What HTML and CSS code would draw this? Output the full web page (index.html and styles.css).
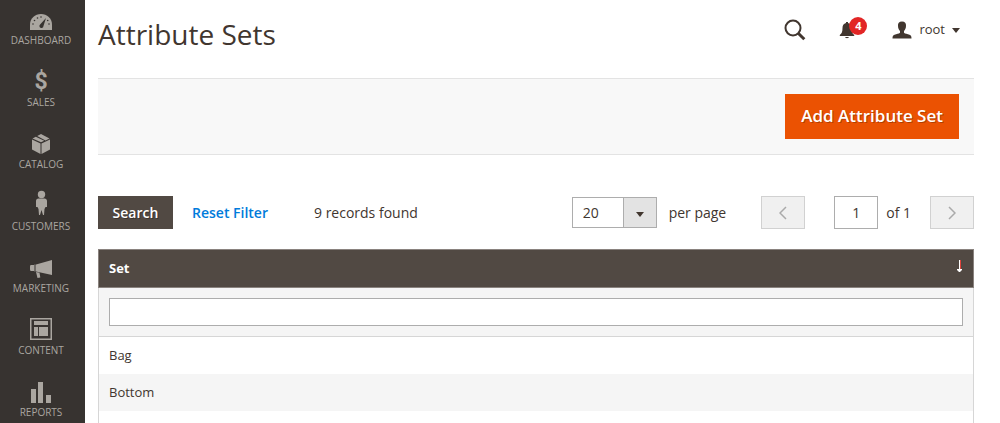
FILE: index.html
```html
<!DOCTYPE html>
<html lang="en">
<head>
<meta charset="utf-8">
<meta name="viewport" content="width=device-width, initial-scale=1">
<title>Attribute Sets</title>
<link rel="stylesheet" href="styles.css">
</head>
<body>
<div class="app">
  <nav class="menu">
    <a class="menu-item" href="#">
      <svg class="menu-icon" viewBox="0 0 28 28" aria-hidden="true">
        <path fill="currentColor" d="M3 26V20.500C3 14.500 8 10 14 10s11 4.500 11 10.500V26z"/>
        <g class="cut"><circle cx="6" cy="20" r=".8"/><circle cx="7.500" cy="16.500" r=".8"/><circle cx="10.500" cy="14" r=".8"/><circle cx="14" cy="13" r=".8"/><circle cx="22" cy="20" r=".8"/><circle cx="20.700" cy="16.500" r=".8"/><path d="M19 14l-2.600 8.200a2 2 0 1 1-3.300-1.700z"/></g>
      </svg>
      <span>DASHBOARD</span>
    </a>
    <a class="menu-item" href="#">
      <span class="menu-icon dollar" aria-hidden="true">$</span>
      <span>SALES</span>
    </a>
    <a class="menu-item" href="#">
      <svg class="menu-icon" viewBox="0 0 28 28" aria-hidden="true">
        <path fill="currentColor" d="M5 11.500l8.500 4V26L5 21.500zM14.500 15.500l8.500-4v10L14.500 26zM5.500 10.500L8.800 8.800l8.400 4L14 14.300zM10.200 8l3.800-2 8.500 4.500-4 1.900z"/>
      </svg>
      <span>CATALOG</span>
    </a>
    <a class="menu-item" href="#">
      <svg class="menu-icon" viewBox="0 0 28 28" aria-hidden="true">
        <circle cx="14.500" cy="4.500" r="3.700" fill="currentColor"/>
        <path fill="currentColor" d="M11.500 8.500h6c1.500 0 2.500 1 2.500 2.500v6h-1.500l-1 2-.500 6h-1l-1.500-5-1.500 5h-1l-.500-6-1-2H9v-6c0-1.500 1-2.500 2.500-2.500z"/>
      </svg>
      <span>CUSTOMERS</span>
    </a>
    <a class="menu-item" href="#">
      <svg class="menu-icon" viewBox="0 0 28 28" aria-hidden="true">
        <path fill="currentColor" d="M25 8v15l-16-3.500v-7zM3.500 13H7v6H3.500L3 17.500v-3zM7.500 12.500h1v7h-1zM9 20l3.500.8.800 4.700-2.800.5z"/>
      </svg>
      <span>MARKETING</span>
    </a>
    <a class="menu-item" href="#">
      <svg class="menu-icon" viewBox="0 0 28 28" aria-hidden="true">
        <path fill="currentColor" fill-rule="evenodd" d="M3 4h22v22H3zM4.500 5.500v19h19v-19zM7 7h14v4H7zM7 13h4v9H7zM12 13h9v9h-9z"/>
      </svg>
      <span>CONTENT</span>
    </a>
    <a class="menu-item" href="#">
      <svg class="menu-icon" viewBox="0 0 28 28" aria-hidden="true">
        <path fill="currentColor" d="M4 13h5v14H4zM11 6h5v21h-5zM19 19h5v8h-5z"/>
      </svg>
      <span>REPORTS</span>
    </a>
  </nav>

  <main class="page">
    <header class="header">
      <h1 class="title">Attribute Sets</h1>
      <div class="header-tools">
        <button class="tool" type="button" aria-label="Search">
          <svg width="22" height="22" viewBox="0 0 22 22"><circle cx="9" cy="9" r="7.500" fill="none" stroke="currentColor" stroke-width="2"/><path d="M14 14l6.300 6.300" stroke="currentColor" stroke-width="3"/></svg>
        </button>
        <button class="tool bell" type="button" aria-label="Notifications">
          <svg width="16" height="18" viewBox="0 0 16 18"><path fill="currentColor" d="M7 1h2v1c2.500.7 3.500 2.500 3.500 5 0 4 .8 5.500 2.700 7v1H.8v-1c1.900-1.500 2.700-3 2.700-7 0-2.500 1-4.300 3.500-5zM6 16h4c-.4 1.500-3.600 1.500-4 0z"/></svg>
          <span class="badge">4</span>
        </button>
        <button class="tool user" type="button">
          <svg width="20" height="18" viewBox="0 0 20 18"><path fill="currentColor" d="M10 .5c3 0 4.200 1.800 4 4.300 0 2.500-.8 4-2 5.200v1.700c1 1 3.500 1.300 5.500 2 1.500.6 2 1.500 2 3.800H.5c0-2.300.5-3.200 2-3.800 2-.7 4.500-1 5.500-2V10C6.800 8.800 6 7.300 6 4.800 5.800 2.300 7 .5 10 .5z"/></svg>
          <span class="user-name">root</span>
          <svg width="8" height="5" viewBox="0 0 8 5"><path fill="currentColor" d="M0 0h8L4 5z"/></svg>
        </button>
      </div>
    </header>

    <div class="actions">
      <button class="primary" type="button">Add Attribute Set</button>
    </div>

    <div class="grid-bar">
      <button class="search" type="button">Search</button>
      <button class="reset" type="button">Reset Filter</button>
      <span class="count">9 records found</span>
      <div class="pager">
        <div class="select">
          <select id="limit"><option>20</option></select>
          <span class="select-arrow"><svg width="8" height="5" viewBox="0 0 8 5"><path fill="currentColor" d="M0 0h8L4 5z"/></svg></span>
        </div>
        <label class="per-page" for="limit">per page</label>
        <button class="step" type="button" aria-label="Previous page" disabled><svg width="8" height="14" viewBox="0 0 8 14"><path d="M7 1L1 7l6 6"/></svg></button>
        <input class="page-no" id="page-no" type="text" value="1">
        <label class="of" for="page-no">of 1</label>
        <button class="step" type="button" aria-label="Next page" disabled><svg width="8" height="14" viewBox="0 0 8 14"><path d="M1 1l6 6-6 6"/></svg></button>
      </div>
    </div>

    <div class="grid">
      <table class="table">
        <thead>
          <tr><th><a class="sort" href="#">Set<svg width="6" height="16" viewBox="0 0 6 16"><path fill="currentColor" d="M2 0h1v9H2zM0 9h5v1L3 12H2L0 10z"/><path fill="#e0433c" d="M3 0h1v9H3z"/></svg></a></th></tr>
          <tr class="filter"><td><input class="filter-input" type="text" aria-label="Set"></td></tr>
        </thead>
        <tbody>
          <tr><td>Bag</td></tr>
          <tr><td>Bottom</td></tr>
        </tbody>
      </table>
    </div>
  </main>
</div>
</body>
</html>
```
FILE: styles.css
```css
* { box-sizing: border-box; }
body {
  margin: 0;
  background: #fff;
  color: #41362f;
  font-family: "Open Sans", "Noto Sans", sans-serif;
  font-size: 14px;
  line-height: 20px;
}
button, input, select { font: inherit; color: inherit; margin: 0; }
button { border: 0; padding: 0; background: none; cursor: pointer; }
svg { display: block; flex: none; }

.app { display: flex; height: 100vh; overflow: hidden; }

.menu { flex: none; width: 85px; padding-right: 3px; background: #373330; }
.menu-item {
  display: flex;
  flex-direction: column;
  align-items: center;
  height: 62px;
  padding-top: 4px;
  color: #aaa6a0;
  font-size: 10px;
  line-height: 16px;
  text-decoration: none;
}
.menu-icon { width: 28px; height: 28px; }
.cut { fill: #373330; }
.dollar { font: bold 23px/32px Roboto, sans-serif; text-align: center; }

.page { flex: 1; min-width: 0; display: flex; flex-direction: column; padding: 0 26px 0 13px; }

.header { display: flex; justify-content: space-between; height: 78px; padding-top: 16px; }
.title { margin: 0; font-size: 28px; font-weight: 400; line-height: 36px; }
.header-tools { display: flex; align-items: center; height: 28px; padding-right: 14px; }
.tool { display: flex; align-items: center; }
.bell { position: relative; margin-left: 33px; }
.badge {
  position: absolute;
  top: -4px;
  left: 10px;
  width: 18px;
  height: 18px;
  border-radius: 9px;
  background: #e22626;
  color: #fff;
  font-size: 11px;
  font-weight: 700;
  line-height: 18px;
  text-align: center;
}
.user { margin-left: 37px; gap: 7px; font-size: 13px; }
.user-name { padding-bottom: 2px; }

.actions {
  display: flex;
  justify-content: flex-end;
  padding: 15px;
  border-top: 1px solid #e3e3e3;
  border-bottom: 1px solid #e3e3e3;
  background: #f8f8f8;
}
.primary {
  height: 45px;
  padding: 0 16px 2px;
  background: #eb5202;
  color: #fff;
  font-size: 17px;
  font-weight: 600;
  text-shadow: 1px 1px 0 rgba(0, 0, 0, .25);
}

.grid-bar { display: flex; align-items: center; margin: 41px 0 20px; }
.search {
  min-width: 75px;
  height: 33px;
  padding: 0 14px;
  background: #514943;
  color: #fff;
  font-weight: 600;
  text-shadow: 1px 1px 0 rgba(0, 0, 0, .3);
}
.reset { margin-left: 19px; color: #007bdb; font-weight: 600; }
.count { margin-left: 46px; }
.pager { display: flex; align-items: center; margin-left: auto; }
.select { display: grid; grid-template-columns: 51px 34px; height: 31px; }
.select select {
  grid-area: 1 / 1 / 2 / 3;
  width: 100%;
  padding: 0 10px;
  border: 1px solid #adadad;
  border-radius: 0;
  background: #fff;
  appearance: none;
}
.select-arrow {
  grid-area: 1 / 2;
  z-index: 1;
  display: grid;
  place-items: center;
  margin: 1px 1px 1px 0;
  padding-top: 3px;
  border-left: 1px solid #adadad;
  background: #e3e3e3;
  pointer-events: none;
}
.per-page { margin: 0 35px 0 12px; }
.step {
  display: grid;
  place-items: center;
  width: 44px;
  height: 33px;
  border: 1px solid #d1d1d1;
  background: #f0f0f0;
}
.step path { fill: none; stroke: #aaa; stroke-width: 1.500; }
.page-no {
  width: 44px;
  height: 33px;
  margin: 0 8px 0 29px;
  border: 1px solid #adadad;
  border-radius: 0;
  text-align: center;
}
.of { margin-right: 19px; }

.grid { flex: 1; border: solid #d6d6d6; border-width: 0 1px; }
.table { width: calc(100% + 2px); margin: 0 -1px; border-collapse: separate; border-spacing: 0; font-size: 13px; }
.table th { padding: 0 10px 2px; height: 39px; border: 1px solid #8a837f; background: #514943; text-align: left; }
.sort { display: flex; align-items: center; justify-content: space-between; color: #fff; font-weight: 700; text-decoration: none; }
.table td { height: 37px; padding: 0 10px 2px; border: solid #d6d6d6; border-width: 0 1px; }
.table .filter td { padding: 10px; border-bottom: 1px solid #d6d6d6; background: #f5f5f5; }
.table tbody tr:nth-child(even) td { background: #f5f5f5; }
.filter-input { display: block; width: 100%; height: 28px; padding: 0 8px; border: 1px solid #adadad; border-radius: 0; }
```
